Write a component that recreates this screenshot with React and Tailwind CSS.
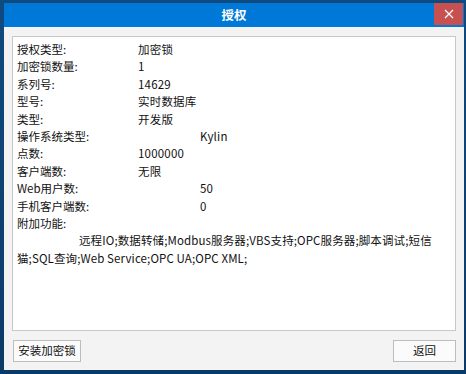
import React from "react";

const rows = [
  { label: "授权类型:", value: "加密锁" },
  { label: "加密锁数量:", value: "1" },
  { label: "系列号:", value: "14629" },
  { label: "型号:", value: "实时数据库" },
  { label: "类型:", value: "开发版" },
  { label: "操作系统类型:", value: "Kylin", far: true },
  { label: "点数:", value: "1000000" },
  { label: "客户端数:", value: "无限" },
  { label: "Web用户数:", value: "50", far: true },
  { label: "手机客户端数:", value: "0", far: true },
];

export default function App() {
  return (
    <div
      className="w-[466px] h-[374px] bg-gradient-to-b from-[#0f4a80] to-[#0c3a68] pt-[3px] pl-[4px] pr-[2px] pb-[4px] text-[11.5px] text-[#111]"
      style={{ fontFamily: '"Noto Sans CJK SC", "Noto Sans", sans-serif' }}
    >
      <div className="flex h-full flex-col">
        {/* title bar */}
        <div className="relative flex h-[24px] items-center justify-center bg-[#0078d7]">
          <span className="text-[12.5px] font-bold text-white">授权</span>
          <div className="absolute right-[1px] top-0 flex h-[22px] w-[29px] items-center justify-center bg-[#c75050]">
            <svg width="10" height="10" viewBox="0 0 10 10">
              <path d="M1 1 L9 9 M9 1 L1 9" stroke="#fff" strokeWidth="1.2" />
            </svg>
          </div>
        </div>

        <div className="flex flex-1 flex-col bg-[#f3f3f3] px-[8px] pt-[9px] pb-[8px]">
          <div className="flex-1 border border-[#c8c8c8] bg-white pl-[4px] pt-[4px]">
            {rows.map((r, i) => (
              <div key={i} className="flex h-[17.4px] items-center whitespace-nowrap">
                <span className="w-[121px]">{r.label}</span>
                <span className={r.far ? "pl-[62px] tracking-[0.2px]" : "tracking-[0.2px]"}>{r.value}</span>
              </div>
            ))}
            <div className="flex h-[17.4px] items-center">附加功能:</div>
            <div className="flex h-[17.4px] items-center whitespace-nowrap pl-[62px] tracking-[0.12px]">
              远程IO;数据转储;Modbus服务器;VBS支持;OPC服务器;脚本调试;短信
            </div>
            <div className="flex h-[17.4px] items-center whitespace-nowrap tracking-[0.12px]">
              猫;SQL查询;Web Service;OPC UA;OPC XML;
            </div>
          </div>

          <div className="mt-[9px] flex items-center justify-between">
            <button className="ml-[1px] flex h-[22px] w-[68px] items-center justify-center border border-[#bdbdbd] bg-[#fbfbfb]">
              安装加密锁
            </button>
            <button className="flex h-[22px] w-[63px] items-center justify-center border border-[#bdbdbd] bg-[#fbfbfb]">
              返回
            </button>
          </div>
        </div>
      </div>
    </div>
  );
}
